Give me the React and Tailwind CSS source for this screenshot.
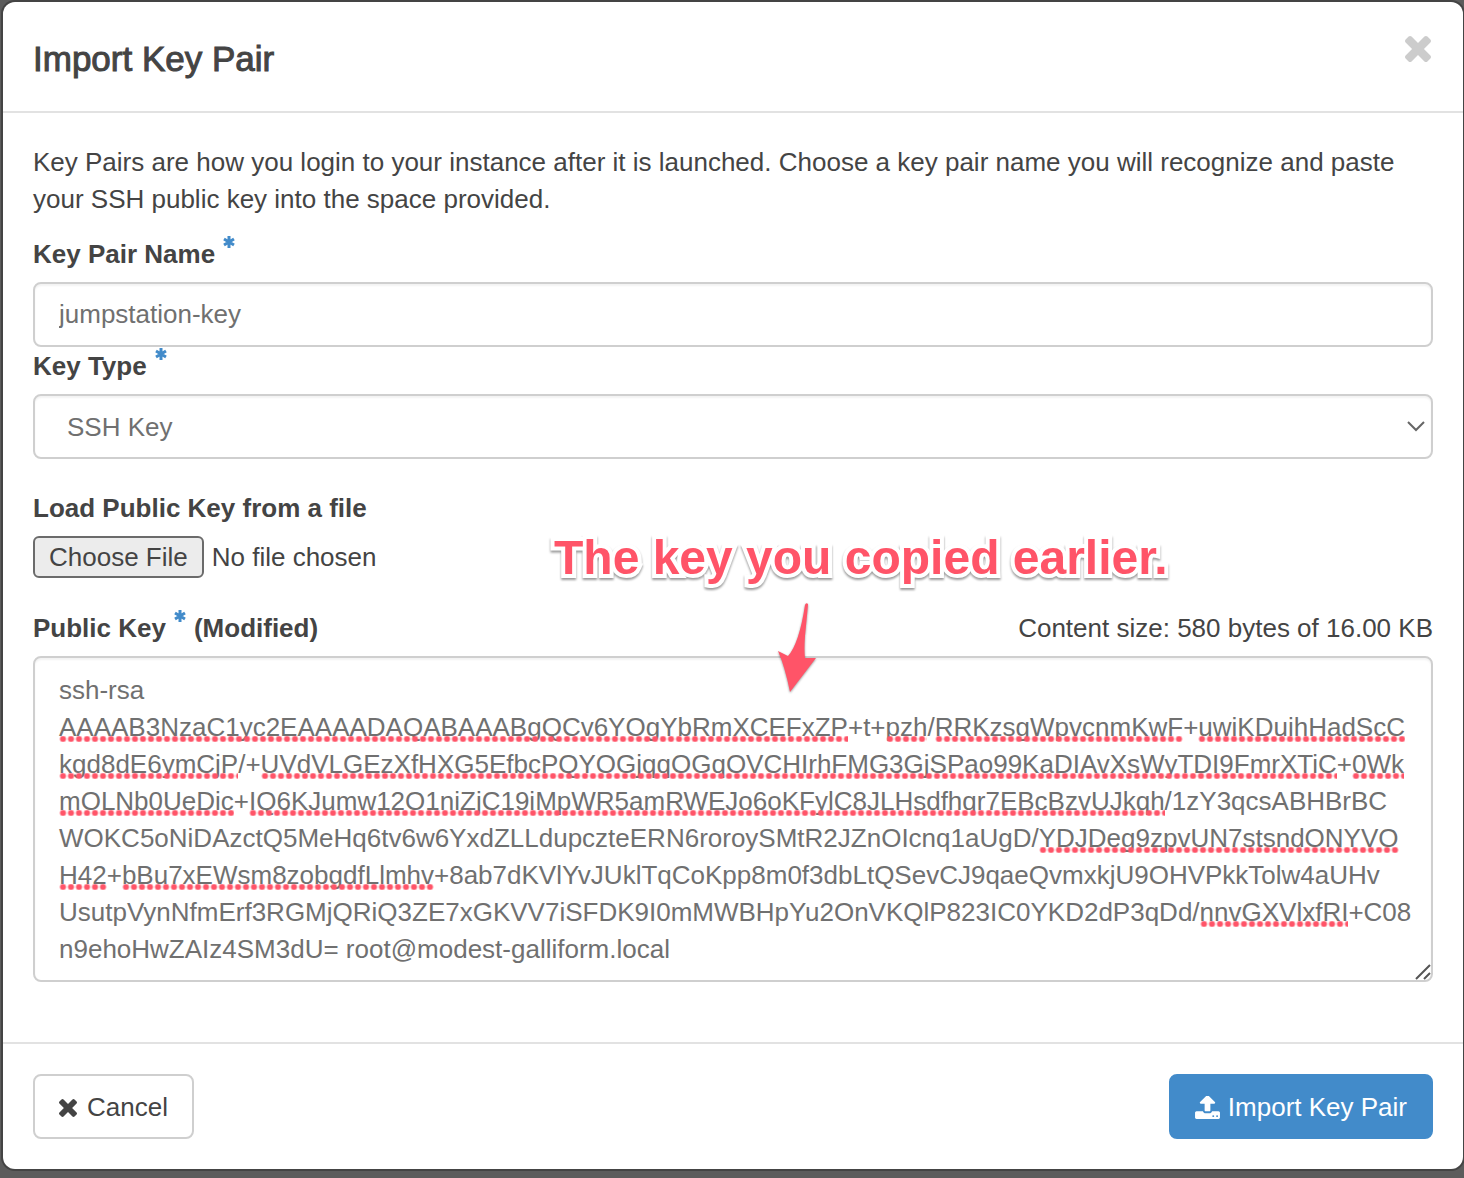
import React, { useState } from "react";

const KEY_LINES = [
  [["ssh-rsa", false]],
  [
    ["AAAAB3NzaC1yc2EAAAADAQABAAABgQCv6YOgYbRmXCEFxZP", true],
    ["+t+", false],
    ["pzh", true],
    ["/", false],
    ["RRKzsgWpvcnmKwF", true],
    ["+", false],
    ["uwiKDuihHadScC", true],
  ],
  [
    ["kgd8dE6ymCjP", true],
    ["/+", false],
    ["UVdVLGEzXfHXG5EfbcPQYOGjqqOGqOVCHIrhFMG3GjSPao99KaDIAvXsWyTDI9FmrXTiC", true],
    ["+", false],
    ["0Wk", true],
  ],
  [
    ["mOLNb0UeDic", true],
    ["+", false],
    ["IQ6KJumw12O1niZjC19iMpWR5amRWEJo6oKFylC8JLHsdfhqr7EBcBzvUJkqh", true],
    ["/1zY3qcsABHBrBC", false],
  ],
  [
    ["WOKC5oNiDAzctQ5MeHq6tv6w6YxdZLLdupczteERN6roroySMtR2JZnOIcnq1aUgD/", false],
    ["YDJDeg9zpvUN7stsndONYVO", true],
  ],
  [
    ["H42", true],
    ["+", false],
    ["bBu7xEWsm8zobgdfLlmhv", true],
    ["+8ab7dKVlYvJUklTqCoKpp8m0f3dbLtQSevCJ9qaeQvmxkjU9OHVPkkTolw4aUHv", false],
  ],
  [
    ["UsutpVynNfmErf3RGMjQRiQ3ZE7xGKVV7iSFDK9I0mMWBHpYu2OnVKQlP823IC0YKD2dP3qDd/", false],
    ["nnvGXVlxfRI", true],
    ["+C08", false],
  ],
  [["n9ehoHwZAIz4SM3dU= root@modest-galliform.local", false]],
];

const KEY_TEXT = KEY_LINES.map((line) => line.map(([t]) => t).join("")).join("\n");

function TimesIcon({ className }) {
  return (
    <svg className={className} viewBox="302 366 1188 1188" fill="currentColor" aria-hidden="true">
      <path d="M1490 1322q0 40-28 68l-136 136q-28 28-68 28t-68-28l-294-294-294 294q-28 28-68 28t-68-28l-136-136q-28-28-28-68t28-68l294-294-294-294q-28-28-28-68t28-68l136-136q28-28 68-28t68 28l294 294 294-294q28-28 68-28t68 28l136 136q28 28 28 68t-28 68l-294 294 294 294q28 28 28 68z" />
    </svg>
  );
}

function UploadIcon({ className }) {
  return (
    <svg className={className} viewBox="64 128 1664 1536" fill="currentColor" aria-hidden="true">
      <path d="M1344 1472q0-26-19-45t-45-19-45 19-19 45 19 45 45 19 45-19 19-45zm256 0q0-26-19-45t-45-19-45 19-19 45 19 45 45 19 45-19 19-45zm128-224v320q0 40-28 68t-68 28h-1472q-40 0-68-28t-28-68v-320q0-40 28-68t68-28h427q21 56 70.500 92t110.500 36h256q61 0 110.500-36t70.500-92h427q40 0 68 28t28 68zm-325-648q-17 40-59 40h-256v448q0 26-19 45t-45 19h-256q-26 0-45-19t-19-45v-448h-256q-42 0-59-40-17-39 14-69l448-448q18-19 45-19t45 19l448 448q31 30 14 69z" />
    </svg>
  );
}

function Required() {
  return (
    <svg className="ml-2 h-3 w-3 shrink-0 text-[#428bca]" viewBox="0 0 12 12" stroke="currentColor" strokeWidth="3" role="img" aria-label="required">
      <path d="M6 0v12M1 3l10 6M11 3L1 9" />
    </svg>
  );
}

const FIELD =
  "w-full rounded-lg border-2 border-[#cfcfcf] bg-white text-[26px] leading-[37px] text-[#707070] shadow-[inset_0_2px_2px_rgba(0,0,0,0.05)] outline-none";

export default function App() {
  const [name, setName] = useState("jumpstation-key");
  const [keyText, setKeyText] = useState(KEY_TEXT);

  return (
    <div className="min-h-screen bg-[#5c5c5c] pt-[2px] pr-px pb-[9px] pl-[3px] font-['Liberation_Sans',Arial,sans-serif] text-[26px] leading-[37px] text-[#444]">
      <div role="dialog" aria-labelledby="title" className="rounded-xl bg-white shadow-[0_0_0_2px_#444]">
        <header className="flex items-start justify-between border-b-2 border-[#e2e2e2] px-[30px] pt-8 pb-7">
          <h1 id="title" className="text-[35px] leading-[49px] [-webkit-text-stroke:1px]">
            Import Key Pair
          </h1>
          <button type="button" aria-label="Close" className="mt-0.5 mr-0.5 text-[#cccccc]">
            <TimesIcon className="h-[26px] w-[26px]" />
          </button>
        </header>

        <form onSubmit={(e) => e.preventDefault()}>
          <div className="px-[30px] pt-[31px] pb-[60px]">
            <p>
              Key Pairs are how you login to your instance after it is launched. Choose a key pair name you will
              recognize and paste your SSH public key into the space provided.
            </p>

            <label htmlFor="name" className="mt-[18px] mb-[9px] flex font-bold">
              Key Pair Name
              <Required />
            </label>
            <input
              id="name"
              type="text"
              value={name}
              onChange={(e) => setName(e.target.value)}
              className={`${FIELD} block px-6 py-3`}
            />

            <label htmlFor="type" className="mt-px mb-[9px] flex font-bold">
              Key Type
              <Required />
            </label>
            <div className="grid">
              <select id="type" className={`${FIELD} appearance-none px-8 pt-[13px] pb-[11px] [grid-area:1/1]`}>
                <option>SSH Key</option>
              </select>
              <svg
                className="pointer-events-none mr-2 h-3 w-[18px] self-center justify-self-end [grid-area:1/1]"
                viewBox="0 0 18 12"
                fill="none"
                stroke="#666"
                strokeWidth="2"
                aria-hidden="true"
              >
                <path d="M1 1l8 8 8-8" />
              </svg>
            </div>

            <label htmlFor="file" className="mt-[31px] mb-[9px] block font-bold">
              Load Public Key from a file
            </label>
            <input
              id="file"
              type="file"
              className="block h-[42px] w-1/3 file:mr-2 file:h-[42px] file:rounded-md file:border-2 file:border-solid file:border-[#6b6b6b] file:bg-[#ececec] file:px-[14px] file:text-[#444]"
            />

            <div className="relative mt-8">
              <div className="mb-[9px] flex justify-between">
                <label htmlFor="key" className="flex font-bold">
                  Public Key
                  <Required />
                  <span className="ml-2">(Modified)</span>
                </label>
                <span>Content size: 580 bytes of 16.00 KB</span>
              </div>
              <div className="grid">
                <div
                  aria-hidden="true"
                  className="pointer-events-none z-10 overflow-hidden px-[26px] py-[14px] whitespace-pre text-transparent select-none [grid-area:1/1]"
                >
                  {KEY_LINES.map((line, i) => (
                    <div key={i} className="flex">
                      {line.map(([t, flagged], j) => (
                        <span
                          key={j}
                          className={
                            flagged
                              ? "bg-[radial-gradient(circle,#ff5468_2px,transparent_4px)] bg-[length:8px_6px] bg-[position:left_bottom_2px] bg-repeat-x"
                              : ""
                          }
                        >
                          {t}
                        </span>
                      ))}
                    </div>
                  ))}
                </div>
                <textarea
                  id="key"
                  rows={8}
                  spellCheck={false}
                  value={keyText}
                  onChange={(e) => setKeyText(e.target.value)}
                  className={`${FIELD} block resize-none overflow-hidden px-6 pt-[14px] pb-3 whitespace-pre [grid-area:1/1]`}
                />
                <svg
                  className="pointer-events-none z-10 mr-0.5 mb-0.5 h-4 w-4 self-end justify-self-end [grid-area:1/1]"
                  viewBox="0 0 16 16"
                  stroke="#555"
                  strokeWidth="2"
                  aria-hidden="true"
                >
                  <path d="M1 15L15 1M9 15l6-6" />
                </svg>
              </div>

              <div className="pointer-events-none absolute -top-[82px] left-[37%] z-20 ml-[3px] text-[#ff5468]">
                <p className="text-[48px] leading-[60px] font-bold whitespace-nowrap [-webkit-text-stroke:8px_white] [filter:drop-shadow(0_2px_1px_rgba(0,0,0,0.4))] [paint-order:stroke_fill]">
                  The key you copied earlier.
                </p>
                <svg
                  className="mt-[14px] ml-[223px] h-[92px] w-10 [filter:drop-shadow(0_1px_1px_rgba(0,0,0,0.4))]"
                  viewBox="0 0 40 92"
                  fill="currentColor"
                  aria-hidden="true"
                >
                  <path d="M28 3Q29 0 31 2Q31 4 28 34Q27 48 28 56L39 56L13 90Q8 65 1 49L11 54Q22 42 28 3Z" />
                </svg>
              </div>
            </div>
          </div>

          <footer className="flex items-center justify-between border-t-2 border-[#e2e2e2] p-[30px]">
            <button
              type="button"
              className="flex items-center gap-[10px] rounded-lg border-2 border-[#cfcfcf] bg-white px-6 pt-[13px] pb-[11px]"
            >
              <TimesIcon className="h-[18px] w-[18px]" />
              Cancel
            </button>
            <button
              type="submit"
              className="flex items-center gap-2 rounded-lg border-2 border-[#428bca] bg-[#428bca] px-6 pt-[13px] pb-[11px] text-white"
            >
              <UploadIcon className="h-[23px] w-[25px]" />
              Import Key Pair
            </button>
          </footer>
        </form>
      </div>
    </div>
  );
}
